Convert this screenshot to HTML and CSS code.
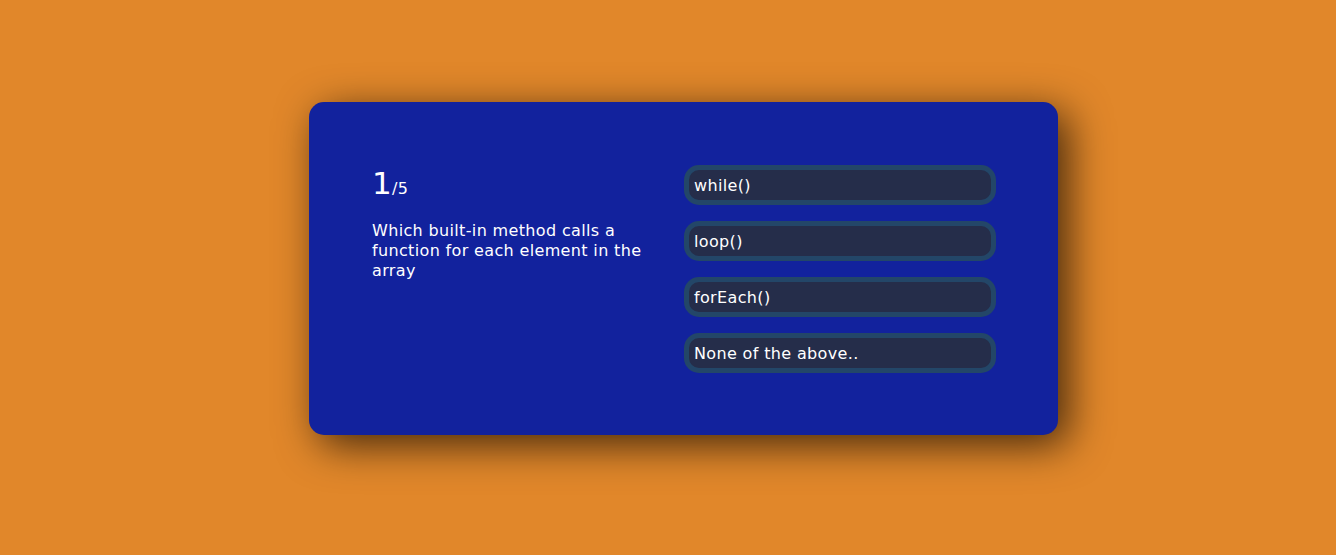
FILE: index.html
```html
<!DOCTYPE html>
<html lang="en">
<head>
<meta charset="utf-8">
<title>Quiz</title>
<link rel="stylesheet" href="styles.css">
</head>
<body>
  <main class="page">
    <div class="app">
      <section class="question-section">
        <div class="question-count"><span class="current">1</span>/5</div>
        <div class="question-text">Which built-in method calls a function for each element in the array</div>
      </section>
      <section class="answer-section">
        <button class="answer">while()</button>
        <button class="answer">loop()</button>
        <button class="answer">forEach()</button>
        <button class="answer">None of the above..</button>
      </section>
    </div>
  </main>
</body>
</html>
```
FILE: styles.css
```css
* { box-sizing: border-box; }
html, body {
  margin: 0;
  padding: 0;
  height: 100%;
}
body {
  background: #e1872a;
  font-family: "DejaVu Sans", Verdana, sans-serif;
  color: #ffffff;
}
.page {
  padding-top: 102px;
  padding-left: 31px;
  display: flex;
  justify-content: center;
}
.app {
  width: 749px;
  background: #12229d;
  border-radius: 15px;
  padding: 63px 62px 62px 63px;
  display: flex;
  justify-content: space-between;
  box-shadow: 10px 10px 42px 0 rgba(0, 0, 0, 0.7);
}
.question-section {
  width: 290px;
}
.question-count {
  font-size: 16px;
  letter-spacing: 0.3px;
  margin-bottom: 20px;
}
.question-count .current {
  font-size: 31px;
}
.question-text {
  font-size: 16px;
  line-height: 20px;
  letter-spacing: 0.35px;
}
.answer-section {
  width: 312px;
  display: flex;
  flex-direction: column;
  gap: 16px;
}
.answer {
  height: 40px;
  width: 100%;
  background: #252d4a;
  border: 5px solid #234668;
  border-radius: 15px;
  color: #ffffff;
  font-family: "DejaVu Sans", Verdana, sans-serif;
  font-size: 16px;
  letter-spacing: 0.35px;
  text-align: left;
  padding: 0 5px;
  display: flex;
  align-items: center;
  cursor: pointer;
}
```
